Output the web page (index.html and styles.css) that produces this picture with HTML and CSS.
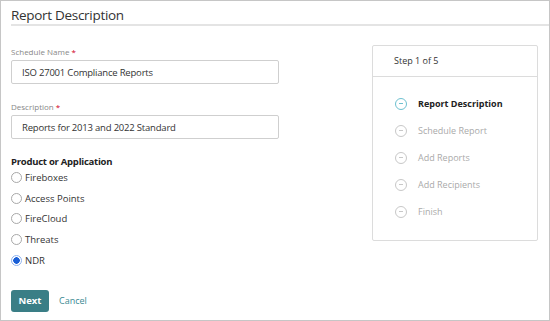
FILE: index.html
```html
<!DOCTYPE html>
<html lang="en">
<head>
  <meta charset="UTF-8" />
  <title>Report Description</title>
  <link rel="stylesheet" href="styles.css">
</head>
<body>
  <div class="frame">
    <header class="page-head">
      <h1>Report Description</h1>
    </header>

    <div class="content">
      <form class="wizard-form">
        <label class="field-label">Schedule Name <span class="req">*</span></label>
        <input class="text-input" type="text" value="ISO 27001 Compliance Reports">

        <label class="field-label">Description <span class="req">*</span></label>
        <input class="text-input" type="text" value="Reports for 2013 and 2022 Standard">

        <div class="group-title">Product or Application</div>
        <div class="radio-list">
          <label class="radio-row"><span class="radio"></span>Fireboxes</label>
          <label class="radio-row"><span class="radio"></span>Access Points</label>
          <label class="radio-row"><span class="radio"></span>FireCloud</label>
          <label class="radio-row"><span class="radio"></span>Threats</label>
          <label class="radio-row"><span class="radio checked"></span>NDR</label>
        </div>

        <div class="actions">
          <button type="button" class="btn-next">Next</button>
          <a href="#" class="cancel">Cancel</a>
        </div>
      </form>

      <aside class="steps">
        <div class="steps-head">Step 1 of 5</div>
        <ul class="steps-list">
          <li class="step active"><span class="step-icon"></span>Report Description</li>
          <li class="step"><span class="step-icon"></span>Schedule Report</li>
          <li class="step"><span class="step-icon"></span>Add Reports</li>
          <li class="step"><span class="step-icon"></span>Add Recipients</li>
          <li class="step"><span class="step-icon"></span>Finish</li>
        </ul>
      </aside>
    </div>
  </div>
</body>
</html>
```

FILE: styles.css
```css
body {
  margin: 0;
  font-family: "Open Sans", Arial, sans-serif;
  color: #333;
  background: #fff;
}
.frame {
  box-sizing: border-box;
  width: 550px;
  height: 321px;
  border: 1px solid #c6c6c6;
  padding: 0 0 0 10px;
}
.page-head {
  border-bottom: 2px solid #e4e4e4;
  height: 23px;
}
.page-head h1 {
  margin: 0;
  padding-top: 5px;
  font-size: 13.5px;
  font-weight: 400;
  letter-spacing: -0.3px;
  line-height: 18px;
  color: #333;
}
.content {
  display: flex;
}
.wizard-form {
  width: 268px;
  padding-top: 20px;
}
.field-label {
  display: block;
  font-size: 8px;
  color: #888;
  line-height: 12px;
  margin-bottom: 2px;
}
.req {
  color: #d0021b;
}
.text-input {
  display: block;
  box-sizing: border-box;
  width: 268px;
  height: 24px;
  border: 1px solid #cfcfcf;
  border-radius: 2px;
  padding: 0 10px;
  font-family: inherit;
  font-size: 9.5px;
  letter-spacing: -0.2px;
  color: #333;
  margin-bottom: 17px;
}
.group-title {
  font-size: 9.5px;
  font-weight: 700;
  letter-spacing: -0.25px;
  color: #222;
  line-height: 14px;
  margin-top: -1px;
}
.radio-list {
  display: flex;
  flex-direction: column;
  gap: 5.7px;
  margin-top: 1px;
}
.radio-row {
  display: flex;
  align-items: center;
  gap: 3px;
  font-size: 9.5px;
  line-height: 15px;
  color: #333;
}
.radio {
  box-sizing: border-box;
  width: 11px;
  height: 11px;
  border: 1px solid #a8a8a8;
  border-radius: 50%;
}
.radio.checked {
  border-color: #8fb3f0;
  background: radial-gradient(circle, #1a5fd6 0 3px, #fff 3.5px);
}
.actions {
  display: flex;
  align-items: center;
  gap: 10px;
  margin-top: 22px;
}
.btn-next {
  width: 38px;
  height: 22px;
  border: none;
  border-radius: 3px;
  background: #3a7e86;
  color: #fff;
  font-family: inherit;
  font-size: 9.5px;
  font-weight: 700;
  padding: 0;
}
.cancel {
  font-size: 9px;
  color: #3a8a93;
  text-decoration: none;
}
.steps {
  box-sizing: border-box;
  width: 166px;
  height: 196px;
  margin: 19px 0 0 93px;
  border: 1px solid #dcdcdc;
  border-radius: 2px;
}
.steps-head {
  height: 30px;
  border-bottom: 1px solid #dcdcdc;
  font-size: 9px;
  line-height: 29px;
  padding-left: 21px;
  color: #333;
}
.steps-list {
  list-style: none;
  margin: 0;
  padding: 19px 0 0 22px;
  display: flex;
  flex-direction: column;
  gap: 12px;
}
.step {
  display: flex;
  align-items: center;
  gap: 11px;
  font-size: 9px;
  line-height: 15px;
  color: #aaa;
}
.step.active {
  color: #222;
  font-weight: 700;
}
.step-icon {
  position: relative;
  box-sizing: border-box;
  width: 12px;
  height: 12px;
  border: 1px solid #c8c8c8;
  border-radius: 50%;
}
.step-icon::after {
  content: "";
  position: absolute;
  left: 3px;
  right: 3px;
  top: 4.5px;
  height: 1px;
  background: #c8c8c8;
}
.step.active .step-icon {
  border-color: #6ec1d0;
}
.step.active .step-icon::after {
  background: #6ec1d0;
}
```
